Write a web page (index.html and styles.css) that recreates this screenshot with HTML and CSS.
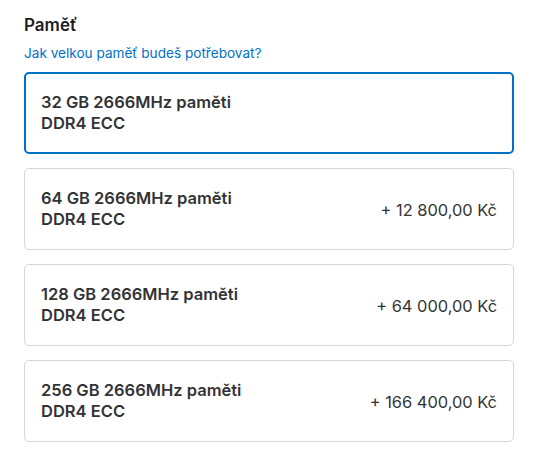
FILE: index.html
```html
<!DOCTYPE html>
<html lang="cs">
<head>
<meta charset="utf-8">
<title>Paměť</title>
<link rel="stylesheet" href="styles.css">
</head>
<body>
<section class="memory">
  <h2 class="title">Paměť</h2>
  <a class="help" href="#">Jak velkou paměť budeš potřebovat?</a>
  <ul class="options">
    <li class="option selected">
      <span class="name">32 GB 2666MHz paměti<br>DDR4 ECC</span>
    </li>
    <li class="option">
      <span class="name">64 GB 2666MHz paměti<br>DDR4 ECC</span>
      <span class="price">+ 12 800,00 Kč</span>
    </li>
    <li class="option">
      <span class="name">128 GB 2666MHz paměti<br>DDR4 ECC</span>
      <span class="price">+ 64 000,00 Kč</span>
    </li>
    <li class="option">
      <span class="name">256 GB 2666MHz paměti<br>DDR4 ECC</span>
      <span class="price">+ 166 400,00 Kč</span>
    </li>
  </ul>
</section>
</body>
</html>
```

FILE: styles.css
```css
html, body {
  margin: 0;
  padding: 0;
  background: #ffffff;
}

body {
  font-family: Inter, "Liberation Sans", Arial, sans-serif;
  color: #333336;
}

.memory {
  padding: 14px 28px 0 24px;
  display: flex;
  flex-direction: column;
}

.title {
  margin: 0;
  font-size: 17px;
  line-height: 22px;
  font-weight: 600;
  color: #1d1d1f;
}

.help {
  margin-top: 8px;
  font-size: 13.6px;
  line-height: 18px;
  color: #0070c9;
  text-decoration: none;
}

.options {
  list-style: none;
  margin: 10px 0 0;
  padding: 0;
  display: flex;
  flex-direction: column;
  gap: 14px;
}

.option {
  box-sizing: border-box;
  height: 82px;
  border: 1px solid #d6d6d6;
  border-radius: 5px;
  padding: 0 16px 0 16px;
  display: flex;
  align-items: center;
  justify-content: space-between;
}

.option.selected {
  border: 2px solid #0071c9;
  padding: 0 15px;
}

.name {
  font-size: 16.5px;
  line-height: 21px;
  font-weight: 600;
  color: #333336;
}

.price {
  font-size: 16.4px;
  line-height: 21px;
  font-weight: 400;
  color: #333336;
  margin-top: 3px;
}
```
